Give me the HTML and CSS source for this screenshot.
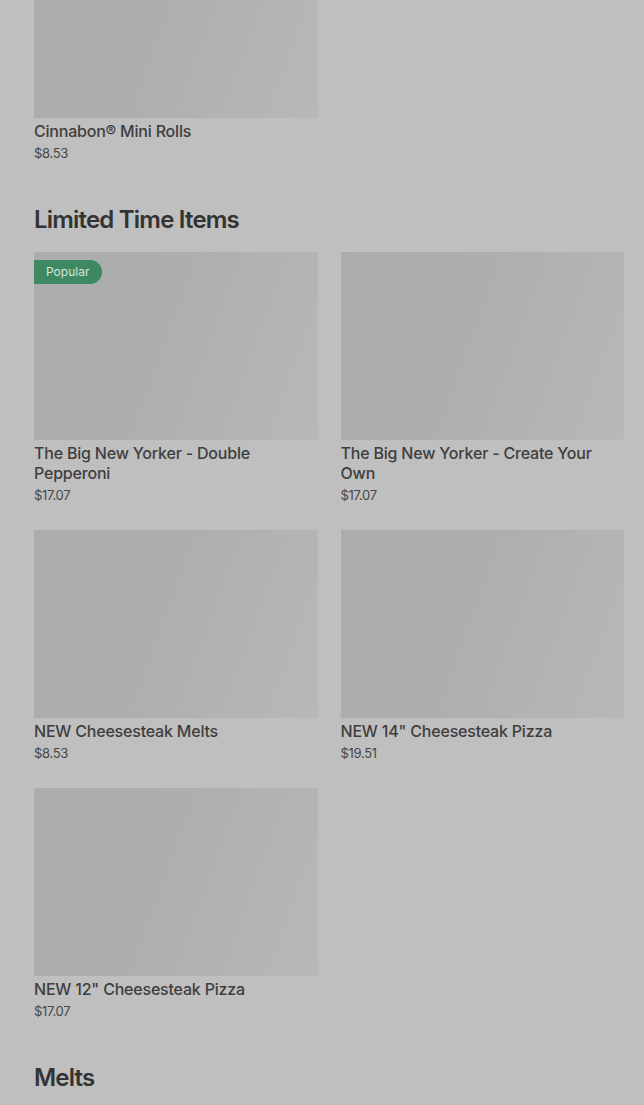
FILE: index.html
```html
<!DOCTYPE html>
<html lang="en">
<head>
<meta charset="utf-8">
<title>Menu</title>
<link rel="stylesheet" href="styles.css">
</head>
<body>
<main class="page">
  <section class="section first">
    <div class="grid">
      <article class="item">
        <div class="thumb"></div>
        <h3 class="name">Cinnabon® Mini Rolls</h3>
        <p class="price">$8.53</p>
      </article>
    </div>
  </section>

  <section class="section">
    <h2 class="heading">Limited Time Items</h2>
    <div class="grid">
      <article class="item">
        <div class="thumb"><span class="badge">Popular</span></div>
        <h3 class="name">The Big New Yorker - Double Pepperoni</h3>
        <p class="price">$17.07</p>
      </article>
      <article class="item">
        <div class="thumb"></div>
        <h3 class="name">The Big New Yorker - Create Your Own</h3>
        <p class="price">$17.07</p>
      </article>
      <article class="item">
        <div class="thumb"></div>
        <h3 class="name">NEW Cheesesteak Melts</h3>
        <p class="price">$8.53</p>
      </article>
      <article class="item">
        <div class="thumb"></div>
        <h3 class="name">NEW 14" Cheesesteak Pizza</h3>
        <p class="price">$19.51</p>
      </article>
      <article class="item">
        <div class="thumb"></div>
        <h3 class="name">NEW 12" Cheesesteak Pizza</h3>
        <p class="price">$17.07</p>
      </article>
    </div>
  </section>

  <section class="section">
    <h2 class="heading">Melts</h2>
  </section>
</main>
</body>
</html>
```

FILE: styles.css
```css
html, body {
  margin: 0;
  padding: 0;
  background: #bfbfbf;
  height: 100%;
  overflow: hidden;
}

body {
  font-family: "Inter", "Roboto", sans-serif;
  color: #3b3b3b;
}

.page {
  padding: 0 20px 0 34px;
  margin-top: -70px;
}

.section + .section {
  margin-top: 44px;
}

.heading {
  margin: 0 0 18px;
  font-size: 24px;
  line-height: 28px;
  font-weight: 600;
  letter-spacing: -0.8px;
  color: #333333;
}

.grid {
  display: grid;
  grid-template-columns: 1fr 1fr;
  column-gap: 23px;
  row-gap: 26px;
}

.item {
  min-width: 0;
}

.thumb {
  position: relative;
  height: 188px;
  background: linear-gradient(110deg, #acacac 0%, #aeaeae 45%, #b8b8b8 100%);
}

.badge {
  position: absolute;
  left: 0;
  top: 8px;
  height: 24px;
  line-height: 24px;
  padding: 0 13px 0 12px;
  background: #3e8862;
  color: #d5e6db;
  font-size: 12px;
  border-radius: 0 12px 12px 0;
}

.name {
  margin: 3px 0 0;
  font-size: 16px;
  line-height: 20px;
  font-weight: 500;
  color: #3e3e3e;
  letter-spacing: -0.2px;
}

.price {
  margin: 3px 0 0;
  font-size: 13px;
  line-height: 18px;
  color: #474747;
  letter-spacing: -0.3px;
}
```
